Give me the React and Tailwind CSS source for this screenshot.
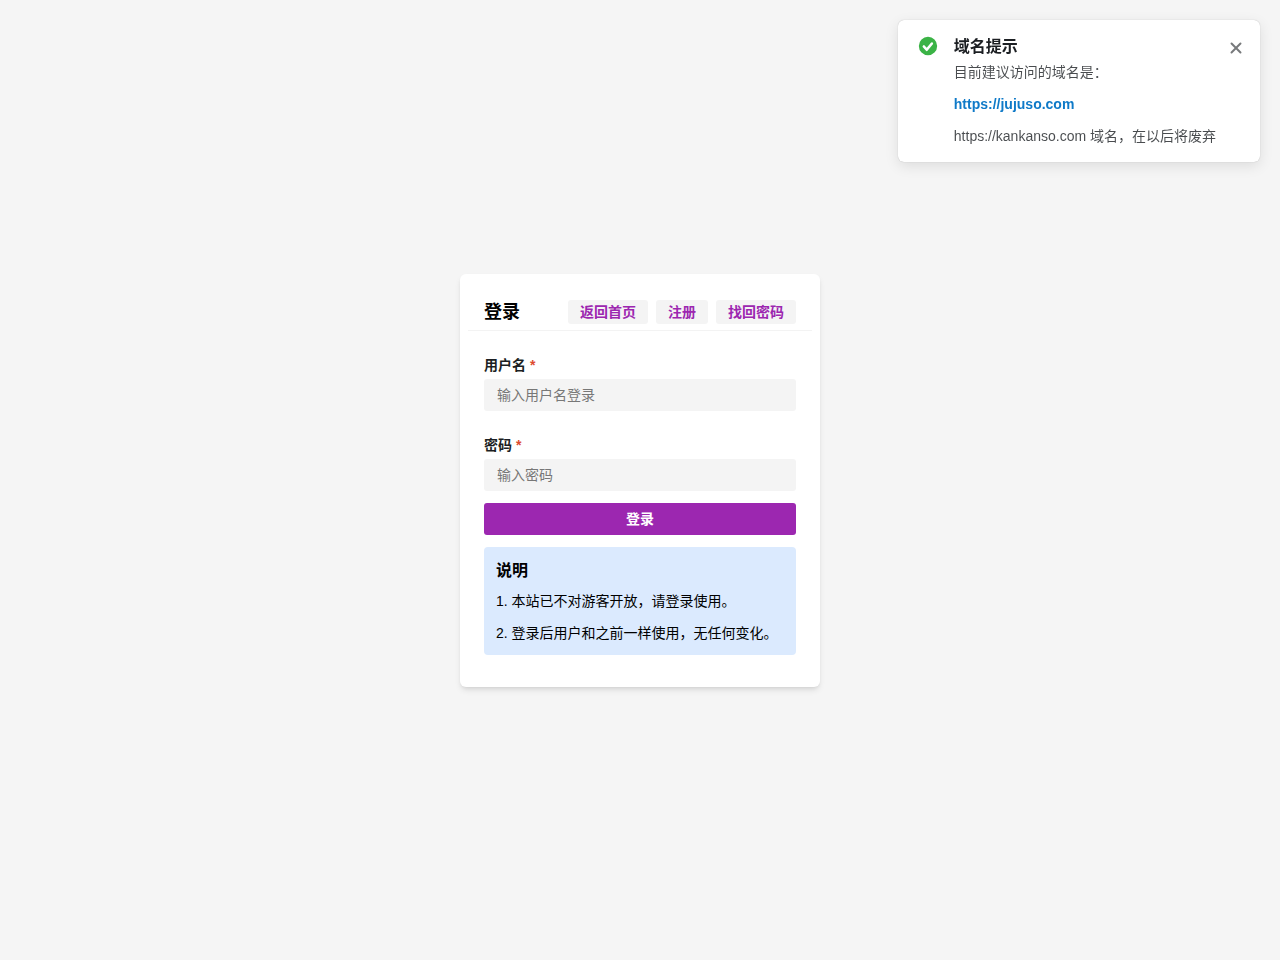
import { useState } from "react"

const links = [
  { label: "返回首页", href: "#home" },
  { label: "注册", href: "#register" },
  { label: "找回密码", href: "#reset" },
]

function TickCircleIcon() {
  return (
    <svg className="size-5 shrink-0 text-[#3bb346]" viewBox="0 0 24 24" fill="currentColor" aria-hidden="true">
      <path
        fillRule="evenodd"
        clipRule="evenodd"
        d="M12 23a11 11 0 1 0 0-22 11 11 0 0 0 0 22Zm5.88-13.18-6.2 7.59a1.5 1.5 0 0 1-2.37.01l-3.5-4a1.5 1.5 0 0 1 2.37-1.84l2.3 2.46L15.5 8a1.5 1.5 0 0 1 2.38 1.82Z" />
    </svg>
  )
}

function CloseIcon() {
  return (
    <svg className="size-4" viewBox="0 0 24 24" fill="none" stroke="currentColor" strokeWidth="3" strokeLinecap="round" aria-hidden="true">
      <path d="M5.28 5.28 18.72 18.72M18.72 5.28 5.28 18.72" />
    </svg>
  )
}

function DomainNotice({ onClose }) {
  return (
    <div
      role="alert"
      className="fixed top-5 right-5 flex items-start rounded-md bg-white py-4 pr-3 pl-5 shadow-[0_0_1px_rgba(0,0,0,0.3),0_4px_14px_rgba(0,0,0,0.1)]">
      <TickCircleIcon />
      <div className="mr-2 ml-4">
        <div className="mb-1 text-base leading-[22px] font-semibold text-[#1c1f23]">域名提示</div>
        <div className="flex flex-col gap-3 text-sm leading-5 text-[#1c1f23]/80">
          <p>目前建议访问的域名是：</p>
          <p>
            <a href="https://jujuso.com" className="font-semibold text-[#0f7ac8]">https://jujuso.com</a>
          </p>
          <p>https://kankanso.com 域名，在以后将废弃</p>
        </div>
      </div>
      <button
        type="button"
        aria-label="关闭"
        onClick={onClose}
        className="flex size-6 items-center justify-center rounded text-[#1c1f23]/60">
        <CloseIcon />
      </button>
    </div>
  )
}

function Field({ id, label, ...props }) {
  return (
    <div className="flex flex-col gap-1 py-3">
      <label htmlFor={id} className="text-sm leading-5 font-semibold text-[#1c1f23]">
        {label}
        <span className="ml-1 text-[#dd4a2e]">*</span>
      </label>
      <input
        id={id}
        className="h-8 w-full rounded-[3px] border border-transparent bg-[#f4f4f4] px-3 text-sm text-[#1c1f23] outline-none placeholder:text-[#777777]"
        {...props} />
    </div>
  )
}

export default function App() {
  const [showNotice, setShowNotice] = useState(true)
  const [username, setUsername] = useState("")
  const [password, setPassword] = useState("")

  return (
    <main
      lang="zh-CN"
      className="flex min-h-screen items-center justify-center bg-[#f5f5f5] font-['Liberation_Sans','Noto_Sans_CJK_SC',sans-serif] text-black">
      <div className="w-full max-w-[360px] rounded-md bg-white px-6 pt-6 pb-8 shadow-md">
        <div className="-mx-4 flex items-center justify-between border-b border-[#f3f3f3] px-4 pt-0.5 pb-1.5">
          <h1 className="text-lg leading-6 font-semibold">登录</h1>
          <nav className="flex gap-2">
            {links.map((link) => (
              <a
                key={link.label}
                href={link.href}
                className="rounded-[3px] bg-[#f4f4f4] px-3 text-sm leading-6 font-semibold text-[#9c27b0]">
                {link.label}
              </a>
            ))}
          </nav>
        </div>
        <form className="pt-3" onSubmit={(e) => e.preventDefault()}>
          <Field
            id="username"
            label="用户名"
            placeholder="输入用户名登录"
            value={username}
            onChange={(e) => setUsername(e.target.value)} />
          <Field
            id="password"
            label="密码"
            type="password"
            placeholder="输入密码"
            value={password}
            onChange={(e) => setPassword(e.target.value)} />
          <button type="submit" className="h-8 w-full rounded-[3px] bg-[#9c27b0] text-sm font-semibold text-white">
            登录
          </button>
        </form>
        <section className="mt-3 rounded bg-blue-100 p-3">
          <h2 className="mb-2 text-base leading-6 font-semibold">说明</h2>
          <div className="flex flex-col gap-3 text-sm leading-5">
            <p>1. 本站已不对游客开放，请登录使用。</p>
            <p>2. 登录后用户和之前一样使用，无任何变化。</p>
          </div>
        </section>
      </div>
      {showNotice && <DomainNotice onClose={() => setShowNotice(false)} />}
    </main>
  )
}
